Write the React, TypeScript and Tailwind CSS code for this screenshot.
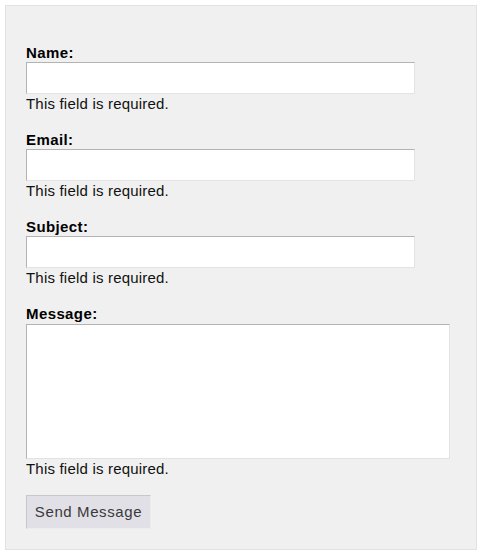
export default function App() {
  const fields = ["Name:", "Email:", "Subject:"];
  return (
    <div className="min-h-[560px] bg-white pt-[5px] pl-[5px] font-['Liberation_Sans',Arial,sans-serif] text-[15px] text-[#111]">
      <form className="w-[472px] border border-[#e2e2e2] bg-[#f0f0f0] px-5 pt-[37px] pb-5">
        {fields.map((label) => (
          <div key={label} className="mb-[18px]">
            <label className="block text-[15px] font-bold leading-[19px] tracking-[0.4px] text-black">{label}</label>
            <input
              type="text"
              className="block h-[32px] w-[389px] border border-t-[#b3b3b3] border-l-[#b3b3b3] border-r-[#e3e3e3] border-b-[#e3e3e3] bg-white outline-none"
            />
            <p className="mt-[1px] leading-[17px] tracking-[0.2px]">This field is required.</p>
          </div>
        ))}
        <div className="mb-[18px]">
          <label className="block text-[15px] font-bold leading-[19px] tracking-[0.4px] text-black">Message:</label>
          <textarea className="mt-[1px] block h-[135px] w-[424px] resize-none border border-t-[#b3b3b3] border-l-[#b3b3b3] border-r-[#e3e3e3] border-b-[#e3e3e3] bg-white outline-none" />
          <p className="mt-[1px] leading-[17px] tracking-[0.2px]">This field is required.</p>
        </div>
        <button
          type="button"
          className="block h-[34px] w-[125px] border border-t-[#c8c8c8] border-l-[#c8c8c8] border-r-[#ececec] border-b-[#ececec] bg-[#e1e0e6] text-[15px] tracking-[0.6px] text-[#3a3a3a]"
        >
          Send Message
        </button>
      </form>
    </div>
  );
}
